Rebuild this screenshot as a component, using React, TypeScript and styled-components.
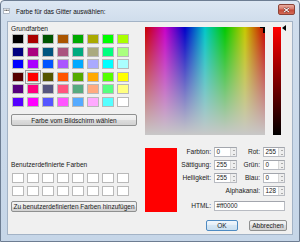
import React from 'react';
import styled, { createGlobalStyle } from 'styled-components';

const Global = createGlobalStyle`
  html, body { margin: 0; padding: 0; background: #ffffff; }
  body { font-family: "Liberation Sans", Arial, sans-serif; }
`;

const FONT = `"Liberation Sans", Arial, sans-serif`;

const Window = styled.div`
  width: 300px;
  height: 242px;
  box-sizing: border-box;
  border: 1px solid #6d7d92;
  border-radius: 4px 4px 0 0;
  background: linear-gradient(to bottom, #dde7f3 0px, #d0ddec 20px, #c6d6e8 100%);
  display: flex;
  flex-direction: column;
  overflow: hidden;
`;

const TitleBar = styled.div`
  height: 20px;
  flex: none;
  display: flex;
  align-items: center;
  padding: 0 4px 0 2px;
`;

const TitleIcon = styled.svg`
  width: 7px;
  height: 6px;
  flex: none;
  margin-right: 6px;
`;

const TitleText = styled.span`
  font: 6.4px ${FONT};
  color: #111;
  white-space: nowrap;
`;

const CloseButton = styled.div`
  margin-left: auto;
  align-self: flex-start;
  margin-top: 3px;
  width: 17px;
  height: 11px;
  box-sizing: border-box;
  border: 1px solid #8c4438;
  border-radius: 2px;
  background: linear-gradient(#e9ada0 0%, #d77a6b 45%, #c44a38 55%, #d46a55 100%);
  display: flex;
  align-items: center;
  justify-content: center;
`;

const Client = styled.div`
  flex: 1;
  margin: 0 6px 6px 6px;
  background: #f0f0f0;
  border: 1px solid #a3b3c6;
  display: flex;
  flex-direction: column;
  padding: 3px 5px 0 3px;
  font: 6.6px ${FONT};
  color: #1a1a1a;
`;

const MainRow = styled.div`
  display: flex;
  gap: 8px;
`;

const LeftColumn = styled.div`
  width: 127px;
  display: flex;
  flex-direction: column;
`;

const SectionLabel = styled.div<{ $mt?: number }>`
  height: 8px;
  line-height: 8px;
  white-space: nowrap;
  margin-top: ${p => p.$mt ?? 0}px;
`;

const SwatchGrid = styled.div<{ $rowGap: number; $mt: number }>`
  display: grid;
  grid-template-columns: repeat(8, 12px);
  grid-auto-rows: 10px;
  column-gap: 3px;
  row-gap: ${p => p.$rowGap}px;
  padding-left: 1px;
  margin-top: ${p => p.$mt}px;
`;

const Swatch = styled.div<{ $c: string; $sel?: boolean }>`
  box-sizing: border-box;
  border: 1px solid #b9b9b9;
  background: ${p => p.$c};
  outline: ${p => (p.$sel ? '1px solid #9a9a9a' : 'none')};
  outline-offset: 1px;
`;

const PushButton = styled.div<{ $w?: number; $h?: number; $mt?: number; $default?: boolean }>`
  box-sizing: border-box;
  width: ${p => (p.$w ? `${p.$w}px` : '100%')};
  height: ${p => p.$h ?? 12}px;
  margin-top: ${p => p.$mt ?? 0}px;
  border: 1px solid ${p => (p.$default ? '#4f8bc2' : '#8f9090')};
  border-radius: 2px;
  background: ${p =>
    p.$default
      ? 'linear-gradient(#f1f7fc 0%, #e3eef8 50%, #d5e6f4 50%, #cadff0 100%)'
      : 'linear-gradient(#f3f3f3 0%, #ebebeb 50%, #dddddd 50%, #d2d2d2 100%)'};
  display: flex;
  align-items: center;
  justify-content: center;
  white-space: nowrap;
  font: 6.5px ${FONT};
  color: #1a1a1a;
`;

const RightColumn = styled.div`
  flex: 1;
  display: flex;
  flex-direction: column;
`;

const PickerRow = styled.div`
  display: flex;
  margin-top: 2px;
  gap: 8px;
`;

const Spectrum = styled.div`
  position: relative;
  width: 120px;
  height: 108px;
  background: linear-gradient(to bottom, rgba(200, 200, 200, 0), rgb(200, 200, 200)),
    linear-gradient(
      to right,
      rgb(200, 0, 0),
      rgb(200, 0, 200),
      rgb(0, 0, 200),
      rgb(0, 200, 200),
      rgb(0, 200, 0),
      rgb(200, 200, 0),
      rgb(200, 0, 0)
    );
`;

const CrossH = styled.div`
  position: absolute;
  top: 0;
  right: 0;
  width: 5px;
  height: 1px;
  background: #000;
`;

const CrossV = styled.div`
  position: absolute;
  top: 0;
  right: 0;
  width: 2px;
  height: 6px;
  background: #000;
`;

const LumColumn = styled.div`
  position: relative;
  width: 14px;
  height: 108px;
`;

const LumBar = styled.div`
  width: 8px;
  height: 100%;
  background: linear-gradient(to bottom, #ff0000, #000000);
`;

const LumArrow = styled.div`
  position: absolute;
  left: 9px;
  top: -2px;
  width: 0;
  height: 0;
  border-top: 3px solid transparent;
  border-bottom: 3px solid transparent;
  border-right: 4px solid #000;
`;

const DetailRow = styled.div`
  display: flex;
  gap: 2px;
  margin-top: 12px;
`;

const Preview = styled.div<{ $c: string }>`
  width: 32px;
  height: 64px;
  margin-top: 1px;
  background: ${p => p.$c};
`;

const Form = styled.div`
  display: grid;
  grid-template-columns: 32px 23px 20px 22px;
  grid-auto-rows: 10px;
  column-gap: 3px;
  row-gap: 3px;
  align-items: center;
`;

const FieldLabel = styled.div<{ $span?: string; $mt?: number }>`
  text-align: right;
  white-space: nowrap;
  line-height: 10px;
  grid-column: ${p => p.$span ?? 'auto'};
  margin-top: ${p => p.$mt ?? 0}px;
`;

const SpinBox = styled.div<{ $span?: string; $mt?: number }>`
  box-sizing: border-box;
  height: 10px;
  border: 1px solid #b8bbc2;
  border-top-color: #a3a6ad;
  background: #fff;
  display: flex;
  align-items: stretch;
  grid-column: ${p => p.$span ?? 'auto'};
  margin-top: ${p => p.$mt ?? 0}px;
`;

const SpinValue = styled.span`
  flex: 1;
  padding-left: 1.5px;
  line-height: 8px;
  font-size: 6.3px;
  white-space: nowrap;
  overflow: visible;
`;

const SpinArrows = styled.div`
  width: 5px;
  display: flex;
  flex-direction: column;
  background: #eeeeee;
  border-left: 1px solid #d8d8d8;
`;

const SpinArrow = styled.div<{ $down?: boolean }>`
  flex: 1;
  display: flex;
  align-items: center;
  justify-content: center;
  &::after {
    content: '';
    width: 0;
    height: 0;
    border-left: 1.5px solid transparent;
    border-right: 1.5px solid transparent;
    ${p => (p.$down ? 'border-top: 1.5px solid #666;' : 'border-bottom: 1.5px solid #666;')}
  }
`;

const Footer = styled.div`
  display: flex;
  justify-content: flex-end;
  gap: 11px;
  margin-top: 8px;
`;

const basicColors: string[] = [];
for (let r = 0; r < 6; r++) {
  for (let c = 0; c < 8; c++) {
    const i = r + c * 6;
    const g = Math.floor(i / 12);
    const rem = i % 12;
    const rr = Math.floor(rem / 3);
    const b = rem % 3;
    basicColors.push(
      `rgb(${Math.floor((rr * 255) / 3)}, ${Math.floor((g * 255) / 3)}, ${Math.floor((b * 255) / 2)})`
    );
  }
}

const Spin: React.FC<{ value: string; span?: string; mt?: number; arrows?: boolean }> = ({
  value,
  span,
  mt,
  arrows = true,
}) => (
  <SpinBox $span={span} $mt={mt}>
    <SpinValue>{value}</SpinValue>
    {arrows && (
      <SpinArrows>
        <SpinArrow />
        <SpinArrow $down />
      </SpinArrows>
    )}
  </SpinBox>
);

export default function App() {
  return (
    <>
      <Global />
      <Window>
        <TitleBar>
          <TitleIcon viewBox="0 0 7 6">
            <rect x="0.5" y="0.5" width="6" height="5" fill="#ffffff" stroke="#8a96a6" strokeWidth="0.6" />
            <circle cx="2" cy="2.2" r="0.7" fill="#555" />
            <circle cx="3.6" cy="2.2" r="0.7" fill="#555" />
            <circle cx="5.1" cy="2.2" r="0.7" fill="#555" />
          </TitleIcon>
          <TitleText>Farbe für das Gitter auswählen:</TitleText>
          <CloseButton>
            <svg width="7" height="6" viewBox="0 0 7 6">
              <path d="M1 0.8 L6 5.2 M6 0.8 L1 5.2" stroke="#6b2a22" strokeWidth="2" />
              <path d="M1 0.8 L6 5.2 M6 0.8 L1 5.2" stroke="#ffffff" strokeWidth="1.1" />
            </svg>
          </CloseButton>
        </TitleBar>
        <Client>
          <MainRow>
            <LeftColumn>
              <SectionLabel>Grundfarben</SectionLabel>
              <SwatchGrid $rowGap={2.5} $mt={1}>
                {basicColors.map((c, i) => (
                  <Swatch key={i} $c={c} $sel={i === 25} />
                ))}
              </SwatchGrid>
              <PushButton $mt={7.5}>Farbe vom Bildschirm wählen</PushButton>
              <SectionLabel $mt={35}>Benutzerdefinierte Farben</SectionLabel>
              <SwatchGrid $rowGap={3} $mt={4}>
                {Array.from({ length: 16 }).map((_, i) => (
                  <Swatch key={i} $c="#ffffff" />
                ))}
              </SwatchGrid>
              <PushButton $mt={5} $h={11}>
                Zu benutzerdefinierten Farben hinzufügen
              </PushButton>
            </LeftColumn>
            <RightColumn>
              <PickerRow>
                <Spectrum>
                  <CrossH />
                  <CrossV />
                </Spectrum>
                <LumColumn>
                  <LumBar />
                  <LumArrow />
                </LumColumn>
              </PickerRow>
              <DetailRow>
                <Preview $c="#ff0000" />
                <Form>
                  <FieldLabel>Farbton:</FieldLabel>
                  <Spin value="0" />
                  <FieldLabel>Rot:</FieldLabel>
                  <Spin value="255" />
                  <FieldLabel>Sättigung:</FieldLabel>
                  <Spin value="255" />
                  <FieldLabel>Grün:</FieldLabel>
                  <Spin value="0" />
                  <FieldLabel>Helligkeit:</FieldLabel>
                  <Spin value="255" />
                  <FieldLabel>Blau:</FieldLabel>
                  <Spin value="0" />
                  <FieldLabel $span="1 / 4">Alphakanal:</FieldLabel>
                  <Spin value="128" />
                  <FieldLabel $mt={3}>HTML:</FieldLabel>
                  <Spin value="#ff0000" span="2 / 5" mt={3} arrows={false} />
                </Form>
              </DetailRow>
            </RightColumn>
          </MainRow>
          <Footer>
            <PushButton $w={32} $h={11} $default>
              OK
            </PushButton>
            <PushButton $w={38} $h={11}>
              Abbrechen
            </PushButton>
          </Footer>
        </Client>
      </Window>
    </>
  );
}
